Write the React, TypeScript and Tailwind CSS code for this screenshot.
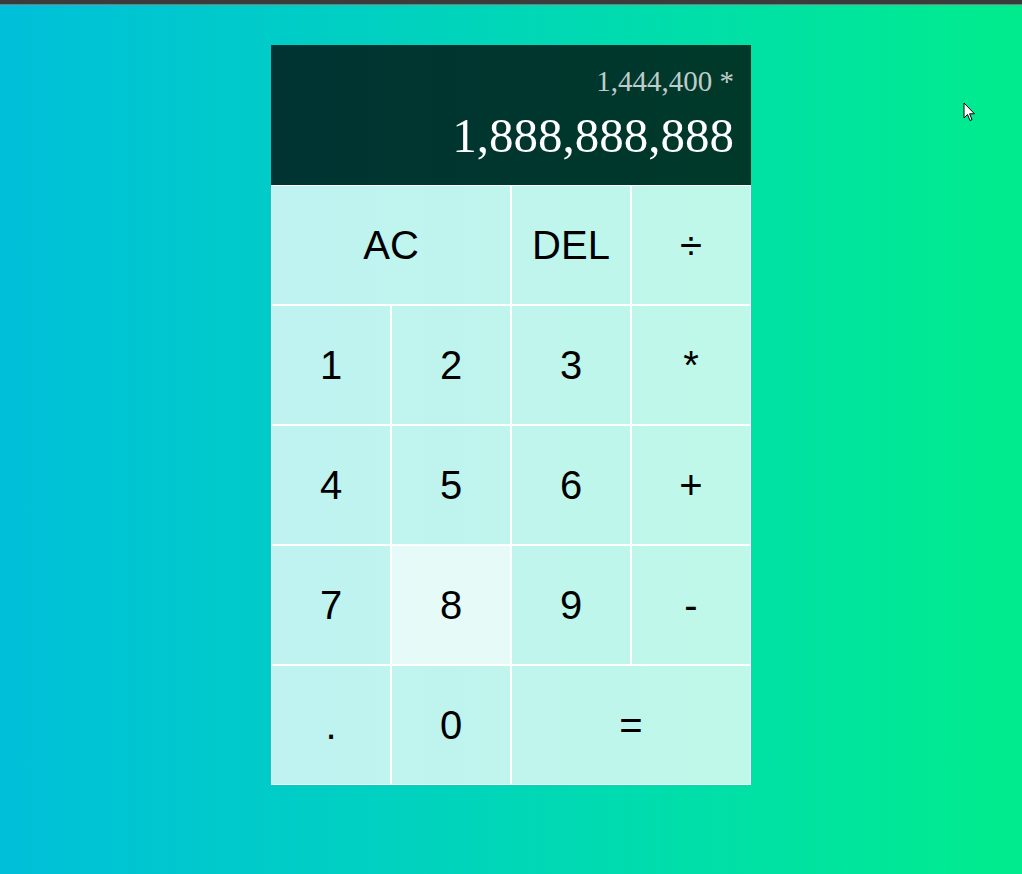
import React from "react";

const Key = ({
  label,
  wide = false,
  hot = false,
}: {
  label: string;
  wide?: boolean;
  hot?: boolean;
}) => (
  <button
    className={
      (wide ? "col-span-2 " : "") +
      (hot ? "bg-white/90 " : "bg-white/75 ") +
      "h-[120px] border border-white flex items-center justify-center text-[40px] text-black cursor-pointer"
    }
    style={{ fontFamily: '"Liberation Sans", Arial, sans-serif' }}
  >
    {label}
  </button>
);

const App = () => {
  return (
    <div className="w-[1022px] h-[874px] overflow-hidden relative">
      <div className="h-[5px] bg-[#3b3b3b] border-b border-[#7a7a7a]" />
      <div className="h-[869px] bg-gradient-to-r from-[#00bfda] to-[#00ec8c] pt-[40px]">
        <div className="w-[480px] ml-[271px] grid grid-cols-4">
          <div
            className="col-span-4 h-[140px] bg-black/75 flex flex-col items-end gap-[15px] pt-[22px] pl-[10px] pr-[17px]"
            style={{ fontFamily: '"Liberation Serif", "Times New Roman", serif' }}
          >
            <div className="text-[29px] text-white/75 leading-none">1,444,400 *</div>
            <div className="text-[49px] text-white leading-none">1,888,888,888</div>
          </div>
          <Key label="AC" wide />
          <Key label="DEL" />
          <Key label="÷" />
          <Key label="1" />
          <Key label="2" />
          <Key label="3" />
          <Key label="*" />
          <Key label="4" />
          <Key label="5" />
          <Key label="6" />
          <Key label="+" />
          <Key label="7" />
          <Key label="8" hot />
          <Key label="9" />
          <Key label="-" />
          <Key label="." />
          <Key label="0" />
          <Key label="=" wide />
        </div>
      </div>
      {/* mouse pointer */}
      <svg
        className="absolute left-[963px] top-[102px]"
        width="14"
        height="21"
        viewBox="0 0 14 21"
      >
        <path
          d="M1 1 L1 16 L4.5 12.5 L7 18.5 L9 17.6 L6.6 11.8 L11.5 11.8 Z"
          fill="white"
          stroke="black"
          strokeWidth="1"
          strokeLinejoin="miter"
        />
      </svg>
    </div>
  );
};

export default App;
